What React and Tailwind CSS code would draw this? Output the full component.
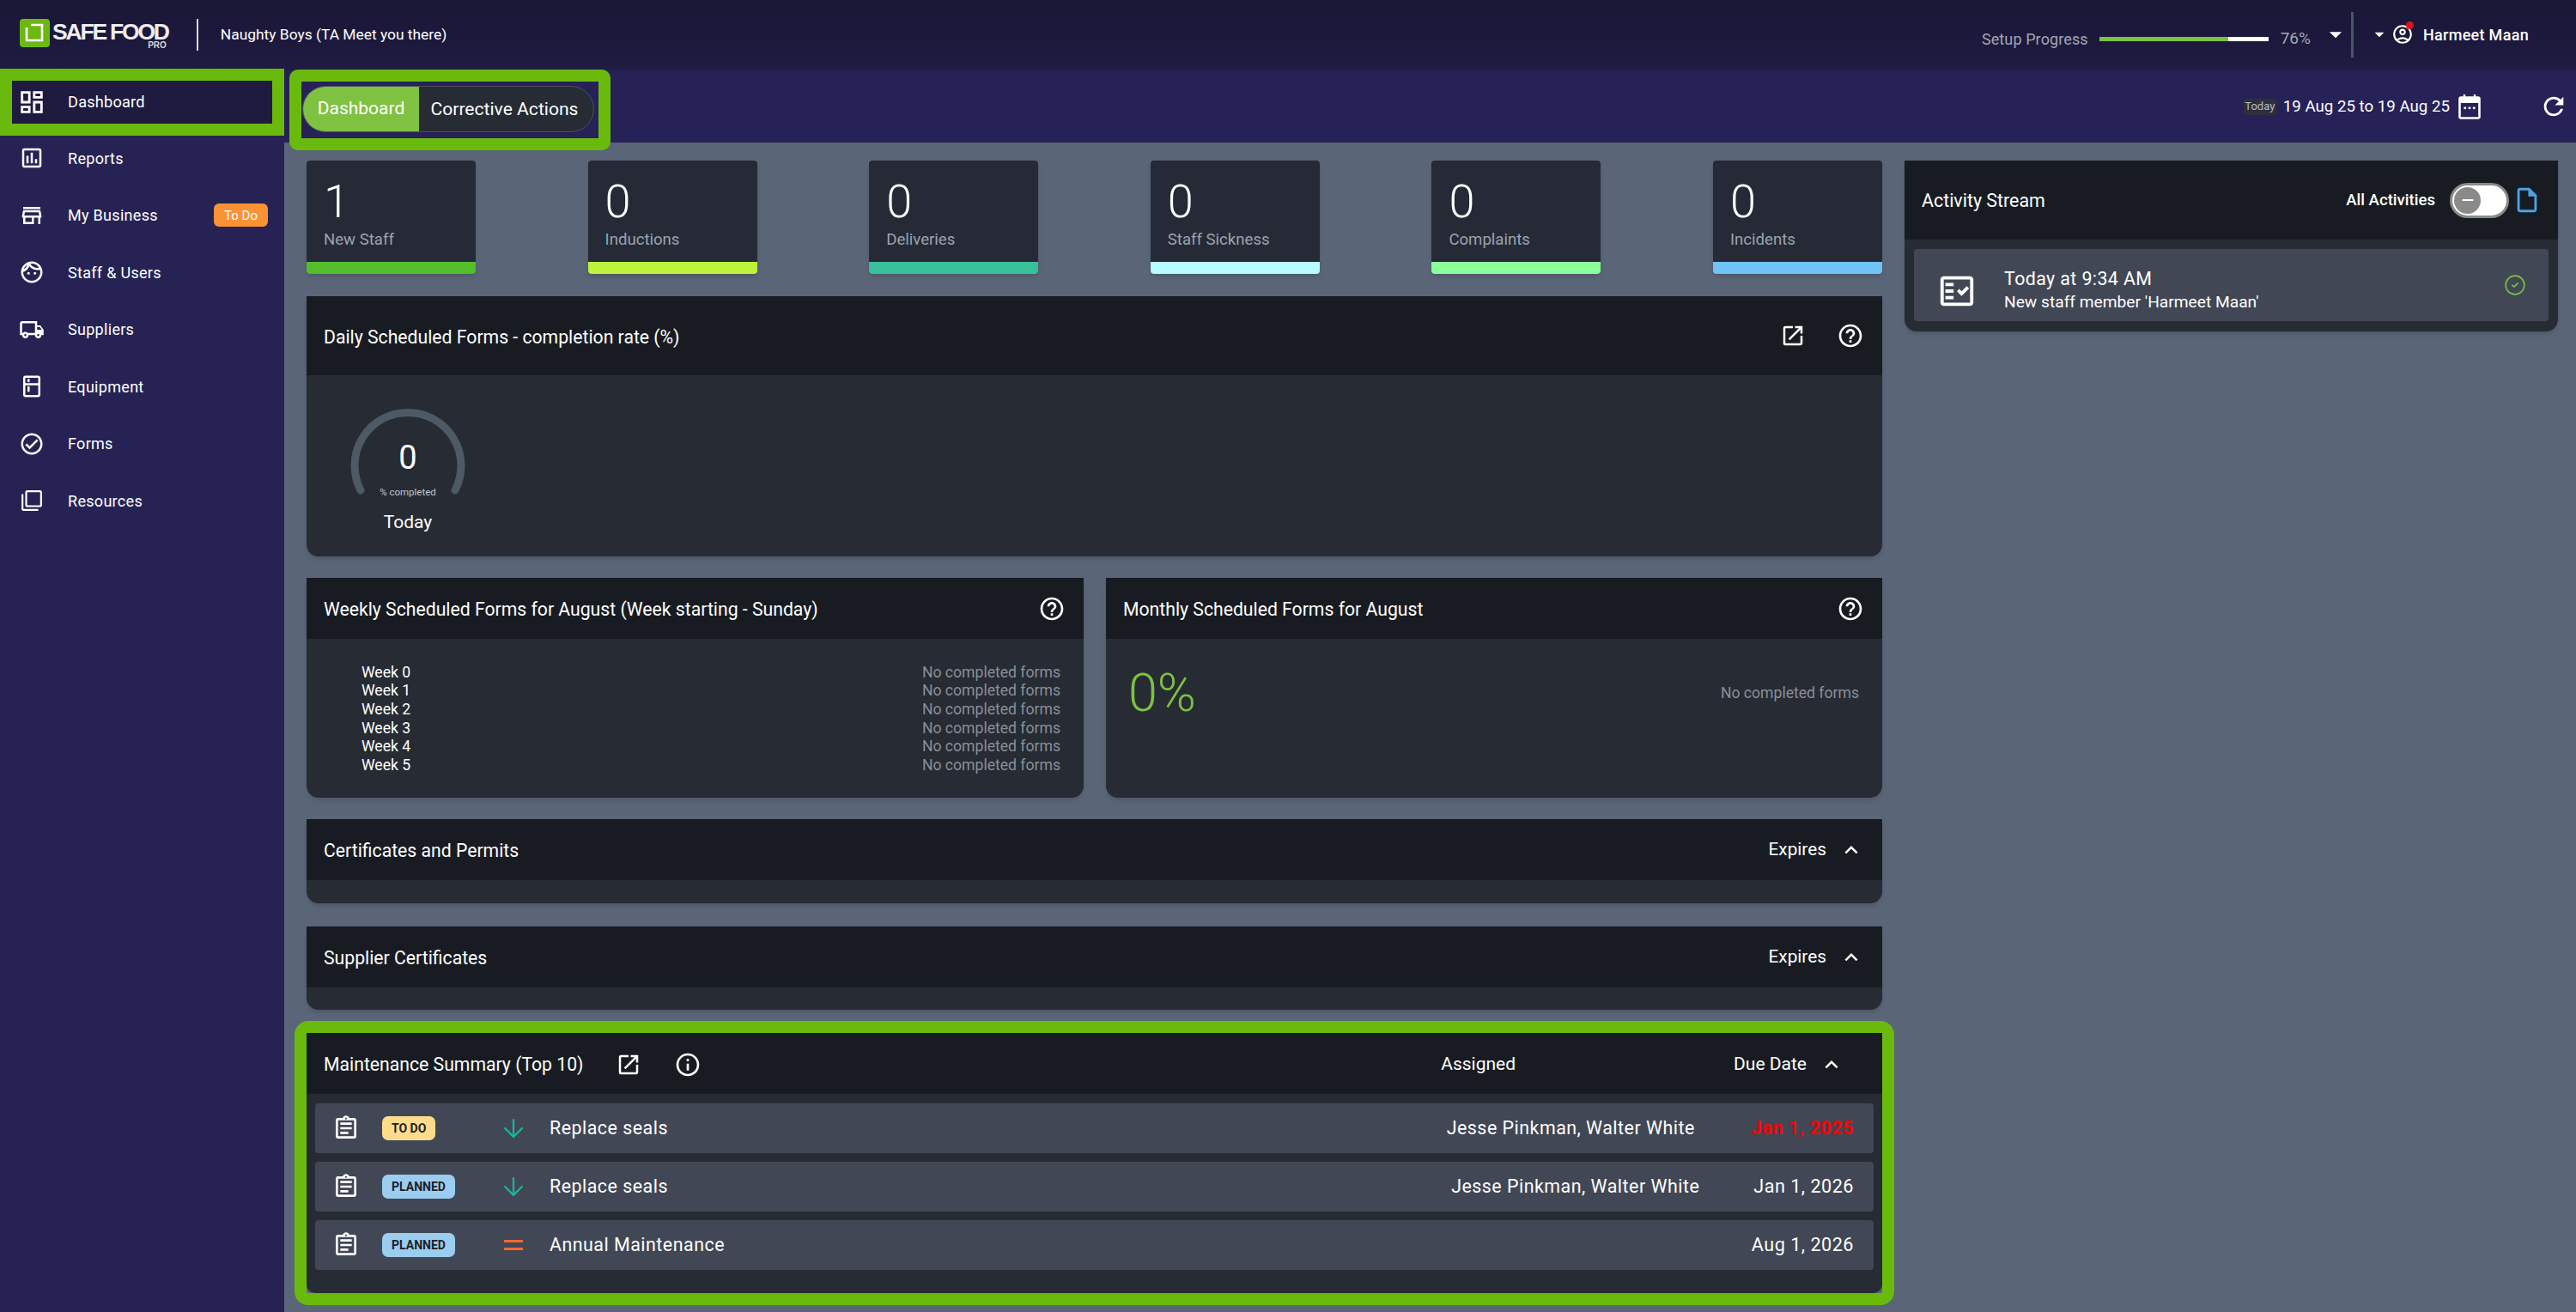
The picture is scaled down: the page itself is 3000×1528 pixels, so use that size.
import React from 'react';
import {
    MdOutlineDashboard, MdOutlineAssessment, MdOutlineStore, MdOutlineFace, MdOutlineLocalShipping,
    MdOutlineKitchen, MdOutlineCheckCircle, MdOutlineFilterNone, MdOutlineOpenInNew, MdOutlineHelpOutline,
    MdOutlineInfo, MdRefresh, MdOutlineAccountCircle, MdOutlineInsertDriveFile,
    MdOutlineAssignment, MdOutlineFactCheck, MdExpandLess, MdArrowDropDown, MdRemove,
} from 'react-icons/md';
import { ArrowDown, CircleCheck } from 'lucide-react';

const navItems = [
    { label: 'Reports', icon: MdOutlineAssessment, size: 'h-[30px] w-[30px]' },
    { label: 'My Business', icon: MdOutlineStore, size: 'h-[30px] w-[30px]', badge: 'To Do' },
    { label: 'Staff & Users', icon: MdOutlineFace, size: 'h-[30px] w-[30px]' },
    { label: 'Suppliers', icon: MdOutlineLocalShipping, size: 'h-[30px] w-[30px]' },
    { label: 'Equipment', icon: MdOutlineKitchen, size: 'h-[30px] w-[30px]' },
    { label: 'Forms', icon: MdOutlineCheckCircle, size: 'h-[30px] w-[30px]' },
    { label: 'Resources', icon: MdOutlineFilterNone, size: 'h-[26px] w-[26px] mx-[2px]' },
];

const stats = [
    { value: '1', label: 'New Staff', bar: 'bg-[#54be2d]' },
    { value: '0', label: 'Inductions', bar: 'bg-[#bdf43b]' },
    { value: '0', label: 'Deliveries', bar: 'bg-[#3abf9b]' },
    { value: '0', label: 'Staff Sickness', bar: 'bg-[#b5fbff]' },
    { value: '0', label: 'Complaints', bar: 'bg-[#8bff9b]' },
    { value: '0', label: 'Incidents', bar: 'bg-[#6fc3f7]' },
];

const weeks = ['Week 0', 'Week 1', 'Week 2', 'Week 3', 'Week 4', 'Week 5'];

const maintenance = [
    { status: 'TO DO', statusBg: 'bg-[#ffdc8c]', arrow: true, title: 'Replace seals', who: 'Jesse Pinkman, Walter White', date: 'Jan 1, 2025', dateCls: 'ml-[66px] font-bold text-[#ff0000]' },
    { status: 'PLANNED', statusBg: 'bg-[#9bcdf0]', arrow: true, title: 'Replace seals', who: 'Jesse Pinkman, Walter White', date: 'Jan 1, 2026', dateCls: 'ml-[63px] text-white' },
    { status: 'PLANNED', statusBg: 'bg-[#9bcdf0]', arrow: false, title: 'Annual Maintenance', who: '', date: 'Aug 1, 2026', dateCls: 'ml-[63px] text-white' },
];

const Logo = () => (
    <div className="flex items-start">
        <svg width="35" height="33" viewBox="0 0 35 33" className="shrink-0">
            <rect width="35" height="33" rx="4" fill="#6ab90f" />
            <path d="M8 10v15h18V7H13" fill="none" stroke="#fff" strokeWidth="2.6" />
        </svg>
        <div className="ml-[3px] mt-[3px] flex flex-col items-end">
            <span className="text-[26.5px] font-bold leading-[24px] tracking-[-2.2px] text-[#eeeeee] font-['Liberation_Sans',sans-serif]">SAFE FOOD</span>
            <span className="mt-[-1px] pr-[2px] text-[10px] font-bold leading-[10px] text-[#d8d8d8] font-['Liberation_Sans',sans-serif]">PRO</span>
        </div>
    </div>
);

const CalendarIcon = () => (
    <svg width="26" height="29" viewBox="0 0 26 29" className="shrink-0 text-white">
        <path d="M7 0v4M19 0v4" stroke="currentColor" strokeWidth="2.4" />
        <rect x="1.5" y="3.5" width="23" height="24" rx="1.5" fill="none" stroke="currentColor" strokeWidth="2.6" />
        <rect x="2" y="4" width="22" height="6" fill="currentColor" />
        <rect x="6.5" y="14.5" width="2.6" height="2.6" fill="currentColor" />
        <rect x="11.7" y="14.5" width="2.6" height="2.6" fill="currentColor" />
        <rect x="16.9" y="14.5" width="2.6" height="2.6" fill="currentColor" />
    </svg>
);

const PanelHeader = ({ title, className, children }) => (
    <div className={`flex items-center justify-between bg-[#181c22] pl-[20px] pr-[21px] ${className}`}>
        <span className="pt-[3px] text-[21.2px] text-white">{title}</span>
        {children}
    </div>
);

const Expires = () => (
    <div className="flex items-center gap-[14px]">
        <span className="pt-[1px] text-[20.8px] text-white">Expires</span>
        <MdExpandLess className="h-[30px] w-[30px] text-white" />
    </div>
);

const Gauge = () => (
    <svg width="140" height="104" viewBox="0 0 140 104" className="block">
        <path d="M15 96 A62 62 0 1 1 125 96" fill="none" stroke="#4d5a66" strokeWidth="9" strokeLinecap="round" />
    </svg>
);

export default function App() {
    return (
        <div className="flex h-[1528px] w-full flex-col overflow-hidden bg-[#5a6577] font-['Roboto',sans-serif] text-white">
            {/* top bar */}
            <header className="flex h-[82px] shrink-0 items-center bg-gradient-to-b from-[#191636] to-[#1f1b42] pb-[2px] pl-[23px]">
                <Logo />
                <div className="ml-[33px] h-[37px] w-[2px] bg-[#dddddd]" />
                <span className="ml-[26px] text-[17.4px] text-white">Naughty Boys (TA Meet you there)</span>
                <div className="ml-auto flex items-center">
                    <div className="flex items-center pt-[10px]">
                        <span className="text-[18px] tracking-[0.1px] text-[#a3a6b3]">Setup Progress</span>
                        <div className="ml-[13px] flex h-[5px] w-[197px] bg-white">
                            <div className="h-full w-[150px] bg-[#7cc142]" />
                        </div>
                        <span className="ml-[14px] text-[19px] text-[#a3a6b3]">76%</span>
                    </div>
                    <MdArrowDropDown className="ml-[12px] h-[34px] w-[34px] text-white" />
                    <div className="ml-[1px] h-[53px] w-[3px] bg-[#4a5568]" />
                    <MdArrowDropDown className="ml-[17px] h-[26px] w-[26px] text-white" />
                    <div className="relative ml-[1px]">
                        <MdOutlineAccountCircle className="h-[26px] w-[26px] text-white" />
                        <span className="absolute right-[0px] top-[-2px] h-[9px] w-[9px] rounded-full bg-[#d9141e]" />
                    </div>
                    <span className="ml-[11px] mr-[55px] text-[18px] font-medium tracking-[0.3px] text-white">Harmeet Maan</span>
                </div>
            </header>

            <div className="flex min-h-0 flex-1">
                {/* sidebar */}
                <aside className="w-[331px] shrink-0 bg-[#262354]">
                    <div className="-mt-[2px] flex h-[78px] items-center border-[14px] border-[#6aba0d] bg-[#1f1b40] pl-[6px]">
                        <MdOutlineDashboard className="h-[34px] w-[34px] text-white" />
                        <span className="ml-[25px] text-[18.2px] tracking-[0.2px] text-white">Dashboard</span>
                    </div>
                    <nav className="-mt-[7px] flex flex-col">
                        {navItems.map(({ label, icon: Icon, badge, size }) => (
                            <div key={label} className="flex h-[66.5px] items-center pl-[22px] pr-[19px]">
                                <Icon className={`${size} text-white`} />
                                <span className="ml-[27px] text-[18px] tracking-[0.3px] text-white">{label}</span>
                                {badge && (
                                    <span className="ml-auto flex h-[27px] w-[63px] items-center justify-center rounded-[6px] bg-[#fb9234] text-[15px] text-white">{badge}</span>
                                )}
                            </div>
                        ))}
                    </nav>
                </aside>

                <div className="flex min-w-0 flex-1 flex-col">
                    {/* sub bar */}
                    <div className="flex h-[84px] shrink-0 items-center bg-[#262257] pl-[6px] pr-[9px]">
                        <div className="-mt-[1px] self-start">
                            <div className="flex h-[94px] w-[374px] items-center rounded-[10px] border-[14px] border-[#6aba0d] bg-[#262257] pb-[2px] pl-[1px]">
                                <div className="flex h-[54px] w-[340px] overflow-hidden rounded-full border border-[#4a5060] bg-[#262b34]">
                                    <div className="flex w-[135px] items-center justify-center bg-[#7fc241] text-[21px] text-white">Dashboard</div>
                                    <div className="flex flex-1 items-center justify-center pr-[4px] text-[21.1px] text-white">Corrective Actions</div>
                                </div>
                            </div>
                        </div>
                        <div className="ml-auto flex items-center">
                            <span className="flex h-[19px] w-[38px] items-center justify-center rounded-[4px] bg-[#2e2f3a] text-[13px] text-[#b9bcc4]">Today</span>
                            <span className="ml-[8px] text-[18.7px] text-white">19 Aug 25 to 19 Aug 25</span>
                            <div className="ml-[10px]"><CalendarIcon /></div>
                            <MdRefresh className="ml-[68px] h-[34px] w-[34px] text-white" />
                        </div>
                    </div>

                    {/* content */}
                    <main className="flex min-h-0 flex-1 gap-[26px] pl-[26px] pr-[21px] pt-[21px]">
                        <div className="flex w-[1835px] shrink-0 flex-col">
                            <div className="flex justify-between">
                                {stats.map((s) => (
                                    <div key={s.label} className="flex h-[132px] w-[197px] flex-col overflow-hidden rounded-[4px] bg-[#262a36] shadow-md">
                                        <div className="flex flex-1 flex-col px-[20px] pt-[20px]">
                                            <span className="text-[54px] font-light leading-[56px] text-white">{s.value}</span>
                                            <span className="mt-[5px] text-[18.6px] leading-[22px] text-[#9ca3af]">{s.label}</span>
                                        </div>
                                        <div className={`h-[14px] ${s.bar}`} />
                                    </div>
                                ))}
                            </div>

                            {/* daily */}
                            <section className="mt-[26px] h-[303px] overflow-hidden rounded-b-[14px] bg-[#272b33] shadow-md">
                                <PanelHeader title="Daily Scheduled Forms - completion rate (%)" className="h-[92px]">
                                    <div className="flex items-center gap-[36px]">
                                        <MdOutlineOpenInNew className="h-[30px] w-[30px] text-white" />
                                        <MdOutlineHelpOutline className="h-[32px] w-[32px] text-white" />
                                    </div>
                                </PanelHeader>
                                <div className="relative ml-[48px] mt-[38px] w-[140px]">
                                    <Gauge />
                                    <div className="absolute left-0 right-0 top-[36px] text-center text-[38px] leading-[44px]">0</div>
                                    <div className="absolute left-0 right-0 top-[91px] text-center text-[11.5px] leading-[14px] text-[#c4c7cc]">% completed</div>
                                    <div className="mt-[17px] text-center text-[21px] leading-[24px] text-white">Today</div>
                                </div>
                            </section>

                            {/* weekly + monthly */}
                            <div className="mt-[25px] flex gap-[26px]">
                                <section className="h-[256px] w-[905px] overflow-hidden rounded-b-[14px] bg-[#272b33] shadow-md">
                                    <PanelHeader title="Weekly Scheduled Forms for August (Week starting - Sunday)" className="h-[71px]">
                                        <MdOutlineHelpOutline className="h-[32px] w-[32px] text-white" />
                                    </PanelHeader>
                                    <div className="flex flex-col pl-[64px] pr-[27px] pt-[28px]">
                                        {weeks.map((w) => (
                                            <div key={w} className="flex h-[21.7px] items-center justify-between text-[17.6px]">
                                                <span className="text-white">{w}</span>
                                                <span className="text-[#8a8f98]">No completed forms</span>
                                            </div>
                                        ))}
                                    </div>
                                </section>
                                <section className="h-[256px] flex-1 overflow-hidden rounded-b-[14px] bg-[#272b33] shadow-md">
                                    <PanelHeader title="Monthly Scheduled Forms for August" className="h-[71px]">
                                        <MdOutlineHelpOutline className="h-[32px] w-[32px] text-white" />
                                    </PanelHeader>
                                    <div className="flex items-center justify-between pl-[26px] pr-[27px] pt-[32px]">
                                        <span className="text-[61px] font-light leading-[62px] text-[#7cc142]">0%</span>
                                        <span className="text-[17.6px] text-[#8a8f98]">No completed forms</span>
                                    </div>
                                </section>
                            </div>

                            {/* certificates */}
                            <section className="mt-[25px] h-[98px] overflow-hidden rounded-b-[14px] bg-[#272b33] shadow-md">
                                <PanelHeader title="Certificates and Permits" className="h-[71px]"><Expires /></PanelHeader>
                            </section>
                            <section className="mt-[27px] h-[97px] overflow-hidden rounded-b-[14px] bg-[#272b33] shadow-md">
                                <PanelHeader title="Supplier Certificates" className="h-[71px]"><Expires /></PanelHeader>
                            </section>

                            {/* maintenance */}
                            <div className="-mx-[14px] mt-[13px] rounded-[16px] border-[14px] border-[#6aba0d]">
                                <section className="h-[303px] overflow-hidden rounded-b-[10px] bg-[#272b33]">
                                    <div className="flex h-[71px] items-center bg-[#181c22] pl-[20px] pr-[44px] pt-[2px]">
                                        <span className="text-[21.2px] text-white">Maintenance Summary (Top 10)</span>
                                        <MdOutlineOpenInNew className="ml-[38px] h-[30px] w-[30px] text-white" />
                                        <MdOutlineInfo className="ml-[38px] h-[32px] w-[32px] text-white" />
                                        <span className="ml-auto text-[21px] text-white">Assigned</span>
                                        <span className="ml-[254px] text-[21px] text-white">Due Date</span>
                                        <MdExpandLess className="ml-[14px] h-[30px] w-[30px] text-white" />
                                    </div>
                                    <div className="flex flex-col gap-[10px] px-[10px] pt-[11px]">
                                        {maintenance.map((m, i) => (
                                            <div key={i} className="flex h-[58px] items-center rounded-[4px] bg-[#414755] pl-[20px] pr-[23px]">
                                                <MdOutlineAssignment className="h-[32px] w-[32px] text-white" />
                                                <div className="ml-[26px] w-[135px]">
                                                    <span className={`inline-flex h-[28px] items-center rounded-[7px] px-[11px] text-[14px] font-bold text-[#1c2026] ${m.statusBg}`}>{m.status}</span>
                                                </div>
                                                <div className="flex w-[60px] justify-start">
                                                    {m.arrow ? (
                                                        <ArrowDown className="ml-[1px] h-[34px] w-[34px] text-[#17b6a0]" strokeWidth={1.6} />
                                                    ) : (
                                                        <div className="ml-[7px] flex w-[22px] flex-col gap-[6px]">
                                                            <div className="h-[3px] bg-[#ef6a2e]" />
                                                            <div className="h-[3px] bg-[#ef6a2e]" />
                                                        </div>
                                                    )}
                                                </div>
                                                <span className="pt-[1px] text-[21.4px] tracking-[0.5px] text-white">{m.title}</span>
                                                <span className="ml-auto pt-[1px] text-[21.4px] tracking-[0.5px] text-white">{m.who}</span>
                                                <span className={`pt-[1px] text-[21.6px] tracking-[0.5px] ${m.dateCls}`}>{m.date}</span>
                                            </div>
                                        ))}
                                    </div>
                                </section>
                            </div>
                        </div>

                        {/* activity stream */}
                        <section className="h-[199px] flex-1 overflow-hidden rounded-b-[14px] bg-[#272b33] shadow-md">
                            <div className="flex h-[92px] items-center bg-[#181c22] pl-[20px] pr-[19px]">
                                <span className="pt-[3px] text-[21.4px] text-white">Activity Stream</span>
                                <span className="ml-auto pt-[2px] text-[18.6px] font-medium text-white">All Activities</span>
                                <div className="ml-[17px] flex h-[41px] w-[69px] items-center rounded-full border-[3px] border-[#8a8a8a] bg-white pl-[2px]">
                                    <div className="flex h-[31px] w-[31px] items-center justify-center rounded-full bg-[#8a8a8a]">
                                        <MdRemove className="h-[22px] w-[22px] text-white" />
                                    </div>
                                </div>
                                <MdOutlineInsertDriveFile className="ml-[4px] h-[34px] w-[34px] text-[#4aa3e8]" />
                            </div>
                            <div className="mx-[11px] mt-[11px] flex h-[84px] items-center rounded-[4px] bg-[#414755] pl-[27px] pr-[26px]">
                                <MdOutlineFactCheck className="mt-[14px] h-[46px] w-[46px] text-white" />
                                <div className="ml-[32px] flex flex-col pt-[12px]">
                                    <span className="text-[21.4px] leading-[27px] tracking-[0.4px] text-white">Today at 9:34 AM</span>
                                    <span className="text-[19.2px] leading-[27px] text-white">New staff member 'Harmeet Maan'</span>
                                </div>
                                <CircleCheck className="ml-auto h-[26px] w-[26px] text-[#7cc142]" strokeWidth={1.5} />
                            </div>
                        </section>
                    </main>
                </div>
            </div>
        </div>
    );
}
